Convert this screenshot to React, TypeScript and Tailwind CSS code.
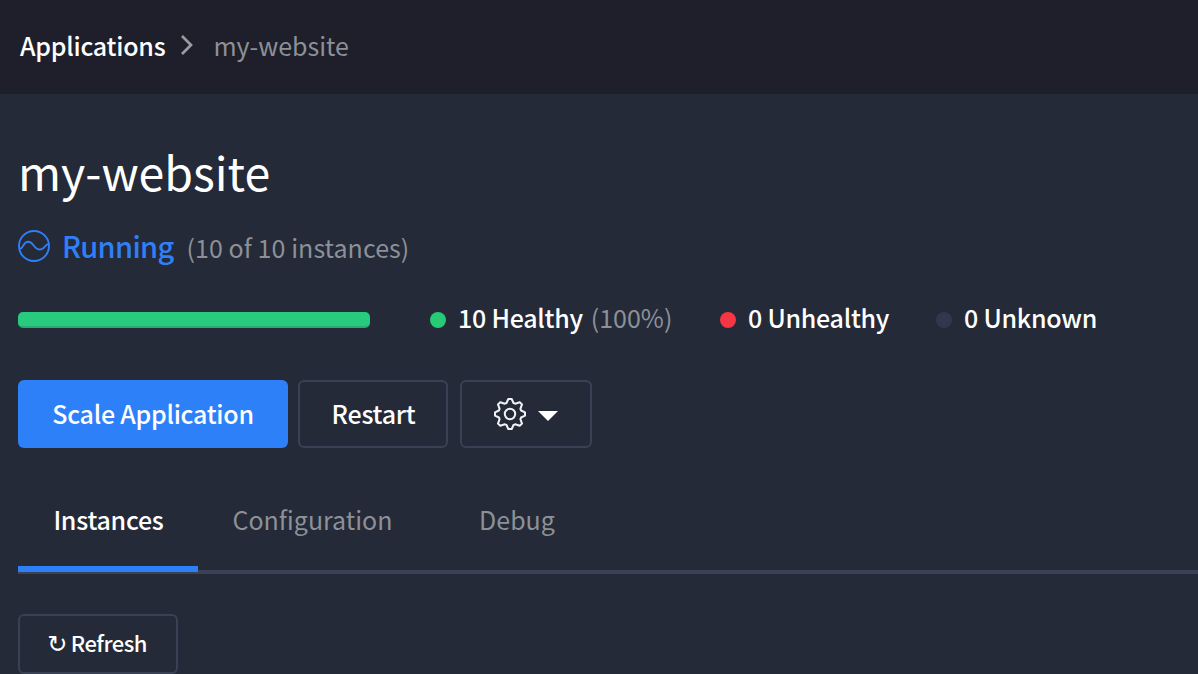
import React from "react";

function Stat({ color, value, note, className }: { color: string; value: string; note?: string; className: string }) {
  return (
    <div className={`flex items-center whitespace-nowrap ${className}`}>
      <span className={`size-4 shrink-0 rounded-full ${color}`} />
      <span className="ml-3 pb-[5px] text-[25px] font-medium tracking-[-0.25px] text-white">{value}</span>
      {note && <span className="ml-2 pb-[5px] text-[25px] text-[#8d9097]">{note}</span>}
    </div>
  );
}

function RunningIcon() {
  return (
    <svg className="size-8 shrink-0" viewBox="0 0 32 32" fill="none" stroke="#2f7ff8" strokeWidth="1.9">
      <circle cx="16" cy="16" r="15" />
      <path d="M1.500 18.800C4.500 19.300 5 14.500 7.500 12.700c2.500-1.800 5.500-.8 8 2.500 2.500 3.500 5 5 8 4 3.500-1.200 3.500-4.200 6.500-5" />
    </svg>
  );
}

function GearIcon() {
  return (
    <svg className="size-8 shrink-0" viewBox="0 0 32 32" fill="none" stroke="#f1f2f5" strokeWidth="2" strokeLinejoin="round">
      <circle cx="16" cy="16" r="5.200" />
      <path d="M14.300 1h3.400l1.800 4 1.700.7L25.700 4.200l2.300 2.200-1.600 4.400.7 1.700L31 14.300v3.400l-3.900 1.800-.7 1.700 1.600 4.400-2.300 2.200-4.500-1.500-1.700.7L17.700 31h-3.400l-1.800-4-1.700-.7-4.500 1.500L4 25.600l1.600-4.400-.7-1.700L1 17.700v-3.400l3.900-1.800.7-1.700L4 6.400l2.300-2.200 4.500 1.500 1.700-.7z" />
    </svg>
  );
}

export default function App() {
  return (
    <div className="flex h-[674px] w-full flex-col overflow-hidden bg-[#242a37] font-['Noto_Sans_CJK_SC','Noto_Sans',sans-serif] leading-none text-white">
      <header className="flex h-[94px] shrink-0 items-center bg-[#1e1f2b] pb-1 pl-5 text-[25px]">
        <span className="font-medium tracking-[-0.25px]">Applications</span>
        <svg className="ml-[15px] h-[22px] w-[14px]" viewBox="0 0 14 22" fill="none" stroke="#9a9ca2" strokeWidth="2.700">
          <path d="M2 2l9 9-9 9" />
        </svg>
        <span className="ml-[19px] text-[#8d9097]">my-website</span>
      </header>
      <main className="flex flex-1 flex-col pl-[18px]">
        <h1 className="mt-[52px] flex h-[50px] items-center text-[46.5px]">my-website</h1>
        <div className="mt-8 flex h-9 items-center whitespace-nowrap">
          <RunningIcon />
          <span className="ml-3 pb-px text-[29px] font-medium tracking-[-0.7px] text-[#2f7ff8]">Running</span>
          <span className="ml-[13px] pt-0.5 text-[25px] tracking-[0.06px] text-[#8d9097]">(10 of 10 instances)</span>
        </div>
        <div className="mt-9 flex h-10 items-center">
          <div className="h-4 w-[352px] shrink-0 rounded-[5px] border-b-2 border-[#25ad6e] bg-[#28cb7d]" />
          <Stat className="ml-[60px] w-[290px]" color="bg-[#28cb75]" value="10 Healthy" note="(100%)" />
          <Stat className="w-[216px]" color="bg-[#f63644]" value="0 Unhealthy" />
          <Stat className="" color="bg-[#30384b]" value="0 Unknown" />
        </div>
        <div className="mt-10 flex h-[68px] text-[25px] font-medium tracking-[-0.25px]">
          <button className="w-[270px] rounded-md bg-[#2e80f8] pb-0.5">Scale Application</button>
          <button className="ml-2.5 w-[150px] rounded-md border-2 border-[#394155] pb-0.5 pl-px">Restart</button>
          <button className="ml-3 flex w-[132px] items-center justify-center gap-3 rounded-md border-2 border-[#394155]">
            <GearIcon />
            <svg className="mt-1 h-[10px] w-5" viewBox="0 0 20 10" fill="white">
              <path d="M0 0h20L10 10z" />
            </svg>
          </button>
        </div>
        <nav className="mt-7 flex h-[98px] shrink-0 items-stretch border-b-4 border-[#3b4256] text-[25px] text-[#8d9097]">
          <a className="-mb-0.5 flex w-[180px] items-center justify-center border-b-6 border-[#2e80f8] pb-1 pl-px font-medium tracking-[-0.25px] text-white">Instances</a>
          <a className="flex w-[229px] items-center justify-center pb-2">Configuration</a>
          <a className="flex w-[180px] items-center justify-center pb-2">Debug</a>
        </nav>
        <button className="mt-10 flex h-[60px] w-40 shrink-0 items-center justify-center gap-1 rounded-md border-2 border-[#394155] pr-0.5 text-[22px] font-medium tracking-[-0.5px]">
          <span className="font-['DejaVu_Sans'] text-[24px]">↻</span>
          <span className="pb-1">Refresh</span>
        </button>
      </main>
    </div>
  );
}
